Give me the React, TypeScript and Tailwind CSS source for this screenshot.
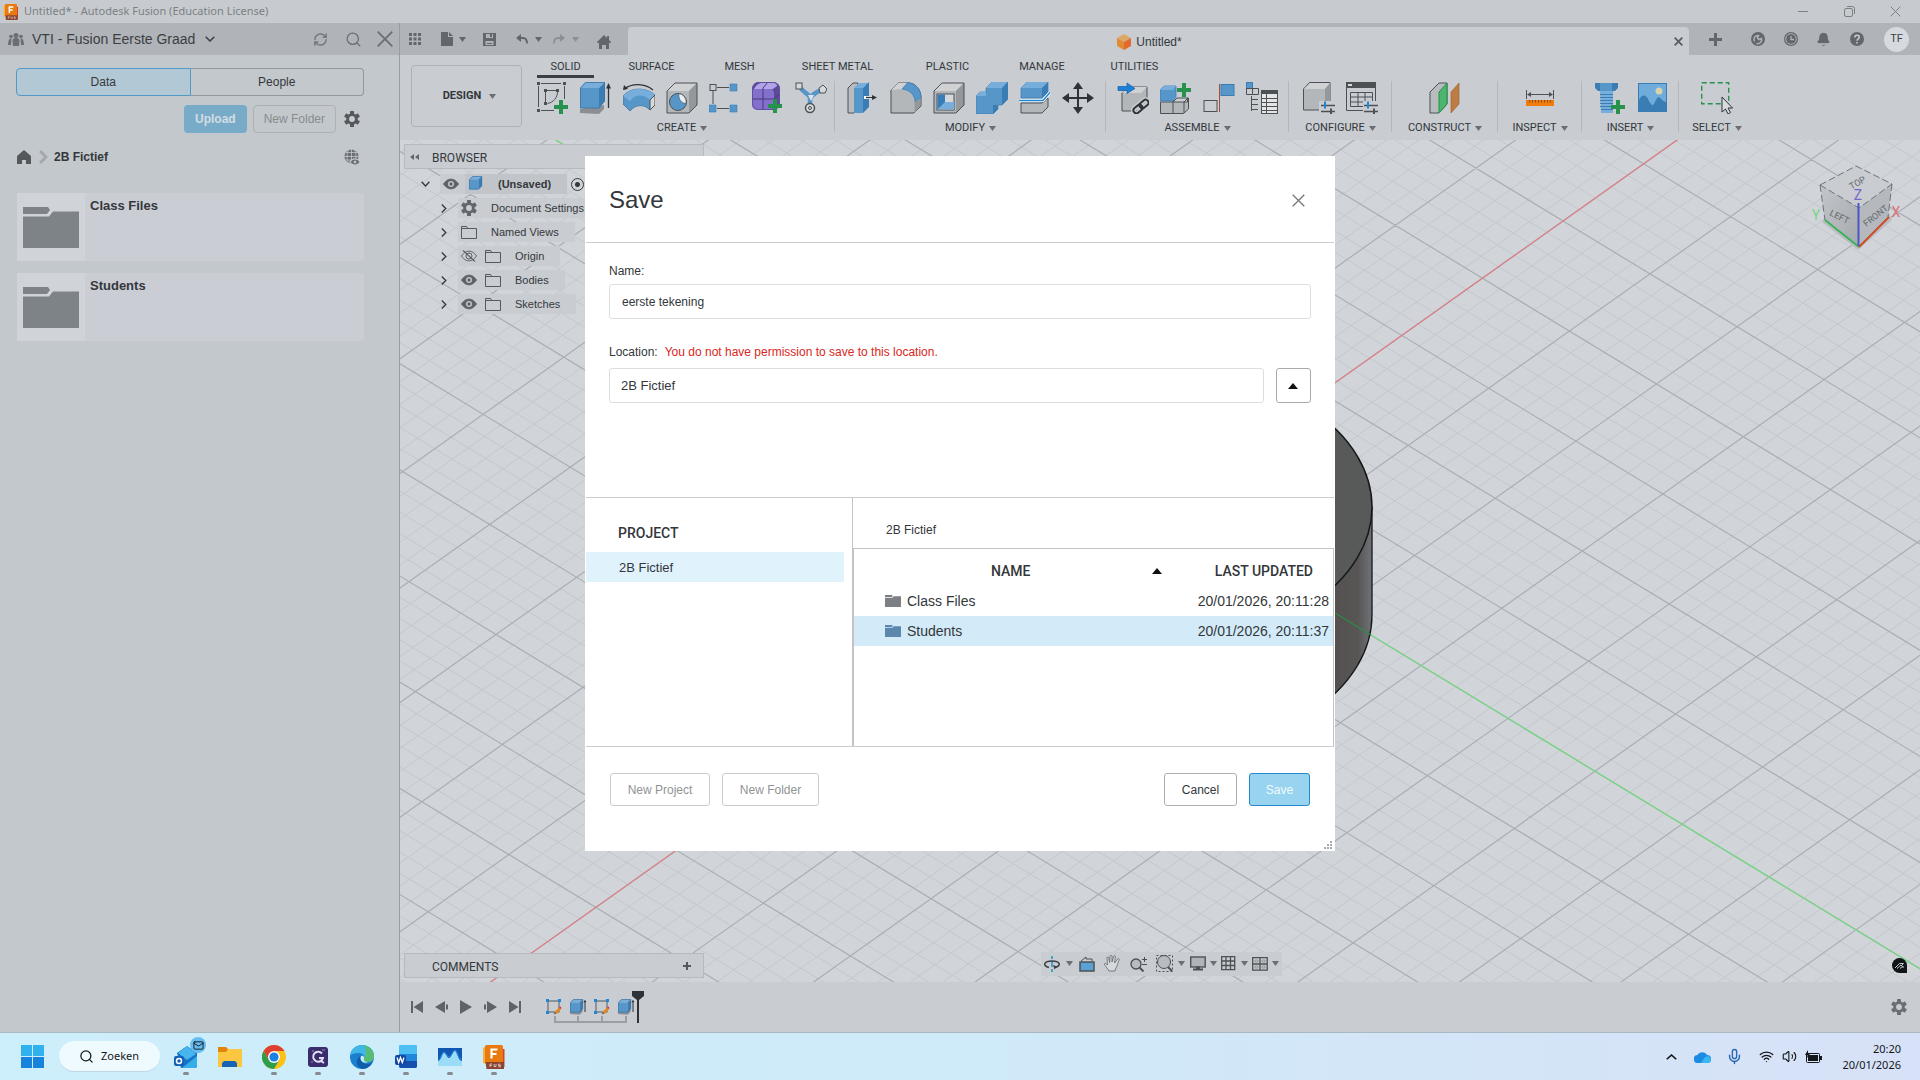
import React from "react";
import type { ReactNode } from "react";
import { Bell, Mail, Mic, RefreshCw, Search, Volume2, Wifi } from "lucide-react";

const BLUE = "#5796c9";
const BLUE_L = "#78aedb";
const BLUE_D = "#3a7db5";
const INK = "#4d5154";
const GREEN = "#27924b";

/* ---------- shared glyphs ---------- */

function Svg({ w = 32, h = 32, box, children }: { w?: number; h?: number; box?: string; children: ReactNode }) {
  return (
    <svg width={w} height={h} viewBox={box ?? `0 0 ${w} ${h}`} fill="none" aria-hidden="true" className="shrink-0">
      {children}
    </svg>
  );
}

function Caret({ className = "text-[#6b6f73]" }: { className?: string }) {
  return (
    <svg width="7" height="5" viewBox="0 0 7 5" aria-hidden="true" className={className}>
      <path d="M0 0h7L3.5 5z" fill="currentColor" />
    </svg>
  );
}

function Cross({ size, weight = 1.5 }: { size: number; weight?: number }) {
  return (
    <Svg w={size} h={size}>
      <path d={`M.7.700L${size - 0.7} ${size - 0.7}M${size - 0.7}.700L.7 ${size - 0.7}`} stroke="currentColor" strokeWidth={weight} />
    </Svg>
  );
}

function PlusSign({ size, weight }: { size: number; weight: number }) {
  return (
    <Svg w={size} h={size}>
      <path d={`M0 ${size / 2}h${size}M${size / 2} 0v${size}`} stroke="currentColor" strokeWidth={weight} />
    </Svg>
  );
}

function ChevDown({ w = 9, up = false }: { w?: number; up?: boolean }) {
  return (
    <svg width={w} height="6" viewBox="0 0 10 6" preserveAspectRatio="none" fill="none" aria-hidden="true" className="shrink-0">
      <path d={up ? "M.7 5.300L5 1l4.300 4.300" : "M.7.700L5 5 9.300.700"} stroke="currentColor" strokeWidth="1.500" />
    </svg>
  );
}

function ChevRight() {
  return (
    <Svg w={6} h={9}>
      <path d="M.8.500l4 4-4 4" stroke="currentColor" strokeWidth="1.300" />
    </Svg>
  );
}

function Gear({ size = 16, color = "#55595c" }: { size?: number; color?: string }) {
  return (
    <svg width={size} height={size} viewBox="0 0 16 16" aria-hidden="true" className="shrink-0">
      <g fill={color}>
        <rect x="6" y="0" width="4" height="16" rx="0.5" />
        <rect x="6" y="0" width="4" height="16" rx="0.5" transform="rotate(60 8 8)" />
        <rect x="6" y="0" width="4" height="16" rx="0.5" transform="rotate(120 8 8)" />
      </g>
      <circle cx="8" cy="8" r="4.3" fill="none" stroke={color} strokeWidth="3" />
      <circle cx="8" cy="8" r="2.9" fill="#c9ccd1" />
    </svg>
  );
}

function Eye({ off = false }: { off?: boolean }) {
  return (
    <svg width="16" height="12" viewBox="0 0 16 12" fill="none" aria-hidden="true" className="shrink-0">
      <path d="M.5 6C3 2.300 5.500 1.200 8 1.200S13 2.300 15.500 6C13 9.700 10.500 10.800 8 10.800S3 9.700.5 6z" fill={off ? "none" : "#5f6367"} stroke="#5f6367" />
      <circle cx="8" cy="6" r="3" fill={off ? "none" : "#c9ccd1"} stroke={off ? "#5f6367" : "none"} />
      {!off && <circle cx="8" cy="6" r="1.700" fill="#5f6367" />}
      {off && <path d="M2 .5l12 11" stroke="#5f6367" strokeWidth="1.200" />}
    </svg>
  );
}

function FolderLine() {
  return (
    <Svg w={16} h={14}>
      <path d="M.5 1.500h5l1.500 2h8.500v10H.5z" stroke="#55595c" />
      <path d="M1 3.500h6" stroke="#55595c" />
    </Svg>
  );
}

function FolderSolid({ w, h, color }: { w: number; h: number; color: string }) {
  return (
    <svg width={w} height={h} viewBox="0 0 56 41" preserveAspectRatio="none" aria-hidden="true" className="shrink-0">
      <path d="M0 0h25l2 3-3 4H0zM0 9.500h26l4-5h26V41H0z" fill={color} />
    </svg>
  );
}

function BlueCube({ arrow = false }: { arrow?: boolean }) {
  return (
    <Svg w={16} h={16}>
      {arrow && <path d="M0 12v3l9.500.7 3-2.700v-2z" fill="#8b8f94" />}
      <path d="M0 3.500L3.500 0H13L9.500 3.500z" fill={BLUE_L} />
      <path d="M0 3.500h9.500v10H0z" fill={BLUE} />
      <path d="M9.500 3.500L13 0v10l-3.500 3.500z" fill={BLUE_D} />
      <path d="M.4 3.700L3.700.4h9v9.400l-3.300 3.300h-9z" stroke="#3e76a8" strokeWidth=".7" />
      {arrow && <path d="M15 2v11M14 3.500l1-2 1 2" stroke="#2f3337" />}
    </Svg>
  );
}

function SketchMini() {
  return (
    <Svg w={16} h={16}>
      <rect x="2" y="2" width="11" height="11" stroke="#55595c" />
      <path d="M0 0h3v3H0zM12 0h3v3h-3zM0 12h3v3H0z" fill="#1d86d6" />
      <path d="M8 15l1-2.500 4-4 2 2-4 4z" fill="#e5861f" />
      <path d="M13 8.500l1.500-1 1 1.500-1 1z" fill="#d8352f" />
      <path d="M8 15.500l.8-2.500 1.600 1.600z" fill="#55595c" />
    </Svg>
  );
}

function FusionLogo({ size }: { size: number }) {
  return (
    <Svg w={size} h={size} box="0 0 24 24">
      <path d="M1 3l3-2v18l-3-1z" fill="#f6b03d" />
      <path d="M20 4h2.500v18H20z" fill="#d8402a" />
      <rect x="3" y="0" width="18" height="18" rx="1.500" fill="#e87a10" />
      <path d="M3.500 17H22v7H4.500z" fill="#8a4632" />
      <path d="M9.500 13.500v-9h6M9.500 9h5" stroke="#fff" strokeWidth="2.200" />
      <path d="M8 22v-3h2M8 20.500h1.700M12 19v2.500h2V19M18.500 19.200h-2v1.300h2v1.300h-2.200" stroke="#e8d8d0" strokeWidth=".8" />
    </Svg>
  );
}

/* ---------- ribbon icons ---------- */

const GreyBox = ({ front = "#b4b7ba" }: { front?: string }) => (
  <>
    <path d="M1 9l8-8h22v22l-8 8H1z" fill={front} />
    <path d="M1 9l8-8h22l-8 8z" fill="#cfd1d3" />
    <path d="M23 9l8-8v22l-8 8z" fill="#94989b" />
    <path d="M1 9l8-8h22v22l-8 8H1z" stroke={INK} />
  </>
);

const PlusMark = ({ x, y }: { x: number; y: number }) => (
  <path d={`M${x + 5} ${y}h4v5h5v4h-5v5h-4v-5h-5v-4h5z`} fill={GREEN} />
);

const icons: Record<string, ReactNode> = {
  sketch: (
    <Svg>
      <path d="M4 1.500h20M1.500 4v21M4 28.500h13M27.500 4v13M8.500 10v10M10 8.500h9M20.500 9.500c0 6-4 11-10 12" stroke={INK} />
      <path d="M0 0h3v3H0zM26 0h3v3h-3zM0 27h3v3H0zM7 7h3v3H7zM19 7h3v3h-3zM7 20h3v3H7z" fill={INK} />
      <PlusMark x={17} y={18} />
    </Svg>
  ),
  extrude: (
    <Svg>
      <path d="M0 27v4l19 1 5-5v-4z" fill="#8b8f94" />
      <path d="M0 6l5-6h20l-6 6z" fill={BLUE_L} />
      <path d="M0 6h19v20H0z" fill={BLUE} />
      <path d="M19 6l6-6v19l-6 7z" fill={BLUE_D} />
      <path d="M.5 6l5-5.500h19V19l-5.500 7H.5z" stroke="#3b719f" strokeWidth=".8" />
      <path d="M28.500 26V4" stroke="#2f3337" strokeWidth="1.300" />
      <path d="M26 6.500L28.500 1 31 6.500z" fill="#2f3337" />
    </Svg>
  ),
  revolve: (
    <Svg>
      <path d="M1 7C9 1 22 1 30 8" stroke="#2f3337" strokeWidth="1.300" />
      <path d="M0 8l1-5 4 4z" fill="#2f3337" />
      <path d="M0 14C8 5 23 5 32 13v10l-5 5c-6-6-14-6-20 1l-7-7z" fill={BLUE} stroke="#3b719f" strokeWidth=".8" />
      <path d="M0 14C8 5 23 5 32 13l-5 5C20 12 13 12 7 19z" fill={BLUE_L} />
      <path d="M27 18l5-5v10l-5 5z" fill="#d6d8da" stroke={INK} />
    </Svg>
  ),
  hole: (
    <Svg>
      <GreyBox />
      <circle cx="12" cy="20" r="8.500" fill={BLUE} stroke={INK} />
      <path d="M13 11.500a8.500 8.500 0 0 1 7 10c-4 0-8-4-7-10z" fill="#e9eef3" stroke={INK} strokeWidth=".6" />
    </Svg>
  ),
  pattern: (
    <Svg>
      <path d="M8 5.500h12M4 9v13M8 26.500h12" stroke={INK} />
      <rect x="1" y="2.500" width="6" height="6" stroke={INK} />
      <path d="M21 2h7v7h-7zM0 23h7v7H0zM21 23h7v7h-7z" fill={BLUE} stroke={BLUE_D} strokeWidth=".6" />
    </Svg>
  ),
  form: (
    <Svg>
      <rect x="0" y="0" width="28" height="28" rx="7" fill="#5c4a96" />
      <rect x="0" y="6" width="22" height="22" rx="5" fill="#8470cc" />
      <path d="M2 7c3-6 8-7 16-7 4 0 7 2 7 4l-4 3z" fill="#b3a4ea" />
      <path d="M0 17h22l6-5M11 6v22M11 6l5-6" stroke="#463a78" />
      <rect x=".5" y=".5" width="27" height="27" rx="6" stroke="#5e4fa0" />
      <PlusMark x={16} y={17} />
    </Svg>
  ),
  pipe: (
    <Svg>
      <path d="M5 5c3 6 9 6 10 11v10M27 8c-6 2-10 4-12 9" stroke={BLUE} strokeWidth="4.500" />
      <path d="M13 13h6l-3 6z" fill="#e0e4e8" />
      <rect x="1" y="1" width="6" height="6" fill="#d6d8da" stroke={INK} />
      <path d="M24 6l4-3 4 4-2 4h-5z" fill="#d6d8da" stroke={INK} />
      <circle cx="15" cy="26" r="4.500" fill="#d6d8da" stroke={INK} strokeWidth="1.500" />
      <circle cx="15" cy="26" r="1.500" stroke={INK} />
    </Svg>
  ),
  press: (
    <Svg>
      <path d="M1 6l5-5h5v25l-4 5H1z" fill="#b9bcbf" stroke={INK} />
      <path d="M7 6l5-5h10l-6 5z" fill={BLUE_L} />
      <path d="M7 6h9v25H7z" fill={BLUE} />
      <path d="M16 6l6-6v25l-6 6z" fill={BLUE_D} />
      <path d="M17 15.500h9" stroke="#fff" strokeWidth="3" />
      <path d="M19 15.500h7" stroke="#2f3337" strokeWidth="1.400" />
      <path d="M25 13l5 2.500-5 2.500z" fill="#2f3337" />
    </Svg>
  ),
  fillet: (
    <Svg>
      <path d="M1 8l7-7h10c8 0 13 7 13 15v8l-7 7H1z" fill="#b4b7ba" stroke={INK} />
      <path d="M1 8l7-7h9l-5 6z" fill="#cfd1d3" />
      <path d="M12 7l6-6.500c8 1 13 7 13 15L25 20c0-7-5-12-13-13z" fill={BLUE} stroke={BLUE_D} strokeWidth=".7" />
      <path d="M24.500 20.500l6-4.500v8l-6 7z" fill="#94989b" />
    </Svg>
  ),
  shell: (
    <Svg>
      <GreyBox />
      <rect x="4" y="12" width="17" height="16" fill="#d5d8db" stroke={INK} />
      <path d="M4.500 12.500H12v9l-7.500 6z" fill={BLUE_D} />
      <path d="M4.500 27.500L12 20h9v7.500z" fill={BLUE_L} />
    </Svg>
  ),
  combine: (
    <Svg>
      <path d="M0 14l4-4h6V6l6-6h16v17l-6 6h-4v4l-5 5H0z" fill={BLUE} stroke={BLUE_D} strokeWidth=".7" />
      <path d="M10 6l6-6h15l-5 6zM0 14l4-4h6v4z" fill={BLUE_L} />
      <path d="M26 6l6-6v17l-6 6zM17 23h5v4l-5 5z" fill={BLUE_D} />
    </Svg>
  ),
  split: (
    <Svg>
      <path d="M2 21h21l6-5v9l-6 6H2z" fill="#b4b7ba" stroke={INK} />
      <path d="M2 6l6-6h21v10l-6 6H2z" fill={BLUE} stroke={BLUE_D} strokeWidth=".7" />
      <path d="M2 6l6-6h21l-6 6z" fill={BLUE_L} />
      <path d="M23 6l6-6v10l-6 6z" fill={BLUE_D} />
      <path d="M0 18.500h24l7-8" stroke="#fff" strokeWidth="3" />
      <path d="M0 18.500h24l7-8" stroke="#1d86d6" strokeWidth="1.500" />
    </Svg>
  ),
  move: (
    <Svg>
      <path d="M16 4v24M4 16h24" stroke="#2f3337" strokeWidth="2" />
      <path d="M16 0l5 7H11zM16 32l5-7H11zM0 16l7-5v10zM32 16l-7-5v10z" fill="#2f3337" />
    </Svg>
  ),
  link: (
    <Svg>
      <path d="M5 11l6-6h19v18l-6 6H5z" fill="#b4b7ba" stroke={INK} />
      <path d="M5 11l6-6h19l-6 6z" fill="#cfd1d3" />
      <path d="M1 4.500h9V1l8 5.500-8 5V8.500H1z" fill="#1d7fd8" stroke="#155fa6" strokeWidth=".7" />
      <g stroke="#c9ccd1" strokeWidth="5">
        <rect x="16" y="24" width="10" height="6" rx="3" transform="rotate(-40 21 27)" />
        <rect x="22" y="19" width="10" height="6" rx="3" transform="rotate(-40 27 22)" />
      </g>
      <g stroke="#2f3337" strokeWidth="2">
        <rect x="16" y="24" width="10" height="6" rx="3" transform="rotate(-40 21 27)" />
        <rect x="22" y="19" width="10" height="6" rx="3" transform="rotate(-40 27 22)" />
      </g>
    </Svg>
  ),
  component: (
    <Svg>
      <path d="M.5 20h27V16h1v11l-5 4.500H.5z" fill="#b4b7ba" stroke={INK} />
      <path d="M13 31V18M13 20l4-4h11l-4 4v11" stroke={INK} />
      <path d="M0 8l4-4h12v11l-3 4H0z" fill={BLUE} stroke={BLUE_D} strokeWidth=".8" />
      <path d="M0 8l4-4h12l-3 4z" fill={BLUE_L} />
      <PlusMark x={17} y={1} />
    </Svg>
  ),
  joint: (
    <Svg>
      <rect x="1" y="18.500" width="13" height="11" stroke={INK} />
      <path d="M16.500 2v28" stroke="#a0522d" />
      <rect x="18" y="2.500" width="13" height="11" fill={BLUE} stroke={BLUE_D} />
    </Svg>
  ),
  bom: (
    <Svg>
      <rect x=".5" y=".5" width="6" height="6" fill={BLUE} stroke={BLUE_D} />
      <path d="M.5 6.500h6v6h-6zM6.500 6.500h6v6h-6z" stroke={INK} />
      <path d="M5.500 14v15M5.500 17.500H12M5.500 22.500H12M5.500 27.500H12" stroke={INK} />
      <rect x="15.500" y="8.500" width="16" height="23" fill="#e3e5e7" stroke={INK} />
      <path d="M15 8h17v4H15z" fill={INK} />
      <path d="M15 16.500h17M15 20.500h17M15 24.500h17M15 28.500h17M20.500 12v20" stroke={INK} />
    </Svg>
  ),
  configCube: (
    <Svg>
      <path d="M.5 7l6-6.500H27V22l-5 6H.5z" fill="#b4b7ba" stroke={INK} />
      <path d="M1 7l6-6h20l-5 6z" fill="#cfd1d3" />
      <path d="M22 7l5-6v21l-5 6z" fill="#94989b" />
      <path d="M16 19h16v13H16z" fill="#c9ccd1" />
      <path d="M18 23.500h14M18 29.500h14" stroke={INK} strokeWidth="1.500" />
      <path d="M22 19.500v7" stroke="#1d86d6" strokeWidth="2" />
      <path d="M28 26.500v5.500" stroke={INK} strokeWidth="2" />
    </Svg>
  ),
  configTable: (
    <Svg>
      <path d="M.5.500h29v28H.5z" stroke={INK} />
      <path d="M0 0h30v6H0z" fill={INK} />
      <path d="M2 2h4v2H2z" fill="#d6d8da" />
      <path d="M4.500 10.500h22v14h-22zM4.500 15h22M4.500 20h22M12 10v15M19 10v15" stroke={INK} />
      <path d="M17 19h15v13H17z" fill="#c9ccd1" />
      <path d="M18 23.500h14M18 29.500h14" stroke={INK} strokeWidth="1.500" />
      <path d="M22 19.500v7" stroke="#1d86d6" strokeWidth="2" />
      <path d="M28 26.500v5.500" stroke={INK} strokeWidth="2" />
    </Svg>
  ),
  plane: (
    <Svg>
      <path d="M1 10l9-9h8v21l-8 9H1z" fill="#b9bcbf" stroke={INK} />
      <path d="M10 10l8-9v21l-8 9z" fill="#4db56f" stroke={GREEN} />
      <path d="M22 10l8-9v21l-8 9z" fill="#bd7b45" stroke="#a3642f" strokeWidth=".7" />
    </Svg>
  ),
  measure: (
    <Svg>
      <path d="M2.500 8v9M29.500 8v9M4 12.500h24" stroke={INK} />
      <path d="M3 12.500l4-2.500v5zM29 12.500l-4-2.500v5z" fill={INK} />
      <path d="M2 18h28v6H2z" fill="#ef7c0c" />
      <path d="M5.500 18v2.500M8.500 18v2.500M11.500 18v2.500M14.500 18v2.500M17.500 18v2.500M20.500 18v2.500M23.500 18v2.500M26.500 18v2.500" stroke="#8a4a0a" />
    </Svg>
  ),
  bolt: (
    <Svg>
      <path d="M2 1h23v5l-3 3H5L2 6z" fill={BLUE_D} />
      <path d="M7 1h12v8H7z" fill={BLUE} />
      <path d="M7 9h13v22H8z" fill={BLUE_L} />
      <path d="M7 12.500h13M7 15.500h13M7 18.500h13M7 21.500h13M7 24.500h13M8 27.500h12" stroke={BLUE_D} />
      <PlusMark x={18} y={18} />
    </Svg>
  ),
  image: (
    <Svg>
      <rect x="2.500" y="1.500" width="28" height="28" fill="#6fabdb" stroke={BLUE_D} />
      <circle cx="23" cy="9" r="3.500" fill="#d9d3ac" />
      <path d="M3 18c3-6 7-6 10 1 2 4 4 6 6 1 2-5 4-6 6-3 2 2 4 3 5 3v9H3z" fill={BLUE_D} />
    </Svg>
  ),
  select: (
    <Svg>
      <rect x=".7" y=".7" width="27" height="21" stroke={GREEN} strokeWidth="1.400" strokeDasharray="5 3" />
      <path d="M21 15v15l3.500-3 2.500 5 2.500-1.500L27 26h4.500z" fill="#d9dcdf" stroke="#2f3337" />
    </Svg>
  ),
};

const groups: { label: string; width: string; items: [string, string][] }[] = [
  { label: "CREATE", width: "w-[306px]", items: [["sketch", "Create sketch"], ["extrude", "Extrude"], ["revolve", "Revolve"], ["hole", "Hole"], ["pattern", "Rectangular pattern"], ["form", "Create form"], ["pipe", "Automated modeling"]] },
  { label: "MODIFY", width: "w-[271px]", items: [["press", "Press pull"], ["fillet", "Fillet"], ["shell", "Shell"], ["combine", "Combine"], ["split", "Split body"], ["move", "Move"]] },
  { label: "ASSEMBLE", width: "w-[183px]", items: [["link", "Insert component"], ["component", "New component"], ["joint", "Joint"], ["bom", "Bill of materials"]] },
  { label: "CONFIGURE", width: "w-[103px]", items: [["configCube", "Configure"], ["configTable", "Configuration table"]] },
  { label: "CONSTRUCT", width: "w-[106px]", items: [["plane", "Offset plane"]] },
  { label: "INSPECT", width: "w-[84px]", items: [["measure", "Measure"]] },
  { label: "INSERT", width: "w-[97px]", items: [["bolt", "Insert fastener"], ["image", "Insert image"]] },
  { label: "SELECT", width: "w-[76px]", items: [["select", "Select"]] },
];

const ribbonTabs: [string, string][] = [
  ["SOLID", "w-[73px]"],
  ["SURFACE", "w-[99px]"],
  ["MESH", "w-[77px]"],
  ["SHEET METAL", "w-[119px]"],
  ["PLASTIC", "w-[101px]"],
  ["MANAGE", "w-[88px]"],
  ["UTILITIES", "w-[97px]"],
];

/* ---------- window chrome ---------- */

function TitleBar() {
  return (
    <header className="flex h-[23px] shrink-0 items-center bg-[#c7cbcf] pr-0.5 pl-[3px] text-[#7b8083]">
      <FusionLogo size={16} />
      <span className="ml-[5px] font-['Noto_Sans',sans-serif] text-[11px]">Untitled* - Autodesk Fusion (Education License)</span>
      <div className="ml-auto flex h-full">
        <button aria-label="Minimize" className="grid w-[46px] place-items-center"><span className="h-px w-2.5 bg-[#7b8083]" /></button>
        <button aria-label="Restore" className="grid w-[46px] place-items-center">
          <Svg w={11} h={11}>
            <rect x=".5" y="2.500" width="8" height="8" rx="1.500" stroke="currentColor" />
            <path d="M3 .5h5.500a2 2 0 0 1 2 2V8" stroke="currentColor" />
          </Svg>
        </button>
        <button aria-label="Close window" className="grid w-[46px] place-items-center"><Cross size={11} weight={1} /></button>
      </div>
    </header>
  );
}

function DataPanel() {
  return (
    <aside className="flex w-[400px] shrink-0 flex-col border-r border-[#999da1] bg-[#c3c8cc] font-['Liberation_Sans',sans-serif] text-[#34383c]">
      <div className="flex h-8 items-center bg-[#b0b3b8] pr-1.5 pl-2 text-[#6b6f73]">
        <Svg w={16} h={13}>
          <g fill="#6b6f73">
            <circle cx="8" cy="2.500" r="2.500" />
            <path d="M5 13l-.5-5C4.500 5.500 6 5 8 5s3.500.5 3.500 3L11 13z" />
            <circle cx="3" cy="3.500" r="1.800" />
            <path d="M0 12l.5-4c.3-2 1.500-2.500 3-2.500L3 12z" />
            <circle cx="13" cy="3.500" r="1.800" />
            <path d="M16 12l-.5-4c-.3-2-1.500-2.500-3-2.500l.5 6.500z" />
          </g>
        </Svg>
        <button className="ml-2 flex items-center gap-2.5 text-sm text-[#3c4044]">
          VTI - Fusion Eerste Graad
          <ChevDown w={10} />
        </button>
        <button aria-label="Refresh" className="ml-auto"><RefreshCw size={15} strokeWidth={2} /></button>
        <button aria-label="Search" className="ml-[17px]"><Search size={17} strokeWidth={1.8} /></button>
        <button aria-label="Close panel" className="ml-[15px]"><Cross size={16} weight={1.8} /></button>
      </div>

      <div className="pt-[13px] pr-[35px] pl-4">
        <div className="flex h-7 text-xs">
          <button className="flex-1 rounded-l-sm border border-[#5399c7] bg-[#b3c8d5]">Data</button>
          <button className="flex-1 rounded-r-sm border border-l-0 border-[#93979b]">People</button>
        </div>
        <div className="mt-[9px] flex h-7 items-center justify-end pr-1 text-xs">
          <button className="h-full rounded-sm bg-[#78abc7] px-[11px] font-bold text-[#d3dde4]">Upload</button>
          <button className="ml-1.5 h-full rounded-sm border border-[#adb1b5] px-2.5 text-[#878c8f]">New Folder</button>
          <button aria-label="Settings" className="ml-2"><Gear /></button>
        </div>
        <nav aria-label="Folder path" className="mt-3 flex h-6 items-center pr-1">
          <a href="#home" aria-label="Home" className="pl-px">
            <Svg w={14} h={14}>
              <path d="M0 6l7-6 7 6v8H9v-4H5v4H0z" fill="#55595c" />
            </Svg>
          </a>
          <span className="ml-2">
            <Svg w={9} h={14}>
              <path d="M1 1l6 6-6 6" stroke="#a5a9ad" strokeWidth="3" />
            </Svg>
          </span>
          <a href="#2b" className="ml-1.5 text-xs font-bold">2B Fictief</a>
          <button aria-label="Open on the web" className="ml-auto">
            <Svg w={16} h={16}>
              <circle cx="7.500" cy="7.500" r="7" fill="#6b6f73" />
              <path d="M0 7.500h15M1.500 3.500h12M1.500 11h12M7.500 0v15M4.500.5c-2 4-2 10 0 14M10.500.5c2 4 2 10 0 14" stroke="#c3c8cc" strokeWidth=".8" />
              <path d="M5 13c3-5 9-5 11.500 0-3 4-8 4-11.500 0z" fill="#c3c8cc" />
              <path d="M6.500 13c2-3.300 7-3.300 9 0-2 3.300-7 3.300-9 0z" fill="#6b6f73" />
              <circle cx="11" cy="13" r="1.300" fill="#c3c8cc" />
            </Svg>
          </button>
        </nav>
        <ul className="mt-6 space-y-3 pl-px">
          {["Class Files", "Students"].map((name) => (
            <li key={name} className="flex h-[68px] rounded-sm bg-[#cacdd3]">
              <div className="flex w-[68px] items-center justify-center bg-[#d0d4d9]">
                <FolderSolid w={56} h={41} color="#7e8387" />
              </div>
              <span className="pt-[3px] pl-[5px] text-[13px] font-bold">{name}</span>
            </li>
          ))}
        </ul>
      </div>
    </aside>
  );
}

function TabStrip() {
  const tool = "flex items-center";
  return (
    <div className="flex h-8 items-stretch bg-[#b0b3b8] pl-[9px] text-[#63676b]">
      <button aria-label="Data panel" className={tool}>
        <Svg w={12} h={12}>
          <path d="M0 0h3v3H0zM4.500 0h3v3h-3zM9 0h3v3H9zM0 4.500h3v3H0zM4.500 4.500h3v3h-3zM9 4.500h3v3H9zM0 9h3v3H0zM4.500 9h3v3h-3zM9 9h3v3H9z" fill="currentColor" />
        </Svg>
      </button>
      <button aria-label="File" className="ml-5 flex items-center gap-1.5">
        <Svg w={12} h={14}>
          <path d="M0 0h7v5h5v9H0z" fill="currentColor" />
          <path d="M8 0l4 4H8z" fill="currentColor" />
        </Svg>
        <Caret className="text-[#63676b]" />
      </button>
      <button aria-label="Save file" className="ml-[17px] flex items-center">
        <Svg w={13} h={13}>
          <path d="M0 0h13v13H0z" fill="currentColor" />
          <path d="M3 1h7v4H3zM2.500 8h8v4h-8z" fill="#b0b3b8" />
          <path d="M7 1h2v3H7zM4 10h5v1H4z" fill="currentColor" />
        </Svg>
      </button>
      <button aria-label="Undo" className="ml-5 flex items-center gap-[7px]">
        <Svg w={12} h={10}>
          <path d="M3 4h4c3 0 4 2 4 5.500" stroke="currentColor" strokeWidth="1.800" />
          <path d="M0 4l5-4v8z" fill="currentColor" />
        </Svg>
        <Caret className="text-[#63676b]" />
      </button>
      <button aria-label="Redo" className="ml-[11px] flex items-center gap-[7px] text-[#8c9094]">
        <Svg w={12} h={10}>
          <path d="M9 4H5C2 4 1 6 1 9.500" stroke="currentColor" strokeWidth="1.800" />
          <path d="M12 4L7 0v8z" fill="currentColor" />
        </Svg>
        <Caret className="text-[#8c9094]" />
      </button>
      <button aria-label="Home tab" className="ml-[18px] flex items-center pt-1.5">
        <Svg w={14} h={14}>
          <path d="M0 7l7-7 3 3V1h2v4l2 2-.5 1H12v6H9v-4H5v4H2V8H.5z" fill="currentColor" />
        </Svg>
      </button>
      <div className="relative mt-1 ml-[17px] flex flex-1 items-center justify-center rounded-t bg-[#c9ccd1] pt-px pr-[18px] text-[#34383c]">
        <Svg w={14} h={16}>
          <path d="M0 4l7-4 7 4-7 4z" fill="#dda869" />
          <path d="M0 4l7 4v8l-7-4z" fill="#e08c35" />
          <path d="M14 4L7 8v8l7-4z" fill="#e4692a" />
        </Svg>
        <span className="ml-[5px] font-['Liberation_Sans',sans-serif] text-xs">Untitled*</span>
        <button aria-label="Close document" className="absolute inset-y-0 right-1.5 flex items-center text-[#5a5e62]"><Cross size={9} weight={1.8} /></button>
      </div>
      <button aria-label="New tab" className="flex w-[53px] items-center justify-center"><PlusSign size={13} weight={3} /></button>
      <div className="mr-[11px] flex items-center">
        <button aria-label="Extensions" className="ml-[9px]">
          <Svg w={14} h={14}>
            <circle cx="7" cy="7" r="7" fill="currentColor" />
            <path d="M3.500 9.500a4 4 0 0 1 4-6L6.500 6l1.500 1.500 2.500-1a4 4 0 0 1-5 5" stroke="#b0b3b8" strokeWidth="1.500" />
          </Svg>
        </button>
        <button aria-label="Job status" className="ml-[19px]">
          <Svg w={14} h={14}>
            <circle cx="7" cy="7" r="7" fill="currentColor" />
            <circle cx="7" cy="7" r="5.300" stroke="#b0b3b8" />
            <path d="M7 4v3.500h3" stroke="#b0b3b8" strokeWidth="1.300" />
          </Svg>
        </button>
        <button aria-label="Notifications" className="ml-[18px]"><Bell size={15} strokeWidth={1.5} fill="currentColor" /></button>
        <button aria-label="Help" className="ml-[19px]">
          <Svg w={14} h={14}>
            <circle cx="7" cy="7" r="7" fill="currentColor" />
            <path d="M4.800 5.500c0-3 4.500-3 4.500-.3C9.300 7 7 6.800 7 8.800M7 10v1.500" stroke="#c9ccd1" strokeWidth="1.500" />
          </Svg>
        </button>
        <button aria-label="Account" className="ml-5 grid size-[25px] place-items-center rounded-full bg-[#d6dadf] font-['Roboto',sans-serif] text-[11px] text-[#3c4347]">TF</button>
      </div>
    </div>
  );
}

function Ribbon() {
  return (
    <div className="flex h-[85px] bg-[#c9ccd1] font-['Roboto',sans-serif] text-[11px] text-[#33373b]">
      <button className="mt-2.5 ml-[11px] flex h-[62px] w-[111px] shrink-0 items-center justify-center gap-2 rounded border border-[#adb1b6] pl-1.5 font-bold">
        DESIGN <Caret />
      </button>
      <div className="ml-[7px] flex flex-col">
        <div className="flex h-6">
          {ribbonTabs.map(([t, w], i) => (
            <button key={t} className={`${w} relative flex justify-center pt-1 leading-4 whitespace-nowrap`}>
              {t}
              {i === 0 && <span className="absolute inset-x-2 bottom-px h-[3px] bg-[#3c4044]" />}
            </button>
          ))}
        </div>
        <div className="flex">
          {groups.map((g, gi) => (
            <div key={g.label} className={`${g.width} flex flex-col items-center pt-[3px] ${gi < groups.length - 1 ? "bg-[linear-gradient(#b4b7bc,#b4b7bc)] bg-[length:1px_51px] bg-[position:right_2px] bg-no-repeat" : ""}`}>
              <div className="flex gap-[11px]">
                {g.items.map(([id, label]) => (
                  <button key={id} aria-label={label}>{icons[id]}</button>
                ))}
              </div>
              <button className="mt-[5px] flex items-center gap-1 leading-[18px]">
                {g.label} <Caret />
              </button>
            </div>
          ))}
        </div>
      </div>
    </div>
  );
}

/* ---------- viewport ---------- */

const ORIGIN = { x: 1160, y: 507 };
const U = { x: 17.4, y: 10.57 };
const V = { x: 16.12, y: -11.44 };
const SPAN = 130;

function gridLine(k: number, along: typeof U, across: typeof U) {
  const cx = ORIGIN.x + across.x * k;
  const cy = ORIGIN.y + across.y * k;
  return `M${(cx - along.x * SPAN).toFixed(1)} ${(cy - along.y * SPAN).toFixed(1)}L${(cx + along.x * SPAN).toFixed(1)} ${(cy + along.y * SPAN).toFixed(1)}`;
}

const steps = Array.from({ length: 141 }, (_, i) => i - 70);
const pathFor = (major: boolean) =>
  steps
    .filter((k) => (k % 5 === 0) === major)
    .map((k) => gridLine(k, U, V) + gridLine(k, V, U))
    .join("");
const minorPath = pathFor(false);
const majorPath = pathFor(true);

function Scene() {
  return (
    <svg className="absolute inset-0 size-full" viewBox="400 140 1520 842" preserveAspectRatio="xMinYMin slice" fill="none" aria-label="Model view">
      <defs>
        <linearGradient id="side" x1="1160" x2="1373" y1="0" y2="0" gradientUnits="userSpaceOnUse">
          <stop offset="0.800" stopColor="#554f50" />
          <stop offset="0.930" stopColor="#585655" />
          <stop offset="1" stopColor="#70767a" />
        </linearGradient>
        <linearGradient id="cubeL" x1="0" y1="0" x2="1" y2="1">
          <stop offset="0" stopColor="#c3c6ca" />
          <stop offset="1" stopColor="#a5a9ad" />
        </linearGradient>
      </defs>
      <path d={minorPath} stroke="#c4c8cc" strokeWidth="1" />
      <path d={majorPath} stroke="#aaaeb3" strokeWidth="1.200" />
      <path d={gridLine(0, V, U)} stroke="#dc8087" strokeWidth="1.300" />
      <path d={gridLine(0, U, V)} stroke="#78d684" strokeWidth="1.300" />
      <path d="M948 507v108a212 139 0 0 0 424 0V507z" fill="url(#side)" stroke="#15181a" strokeWidth="1.300" />
      <ellipse cx="1160" cy="507" rx="212" ry="139" fill="#575a59" stroke="#15181a" strokeWidth="1.500" />
      <path d="M1335 613l36 22" stroke="#2a8c43" strokeWidth="1.300" />

      <g>
        <path d="M1822 222l36 28 34-30-4-8h-60z" fill="#b9bdc2" />
        <path d="M1820 185l36-19 36 18-33 24z" fill="#c9ccd0" />
        <path d="M1820 185l39 23v39l-34-27z" fill="url(#cubeL)" />
        <path d="M1892 184l-33 24v39l29-30z" fill="#b5b9bd" />
        <path d="M1820 185l36-19 36 18-33 24zM1820 185l5 35M1892 184l-4 33" stroke="#6f7377" strokeDasharray="7 3" />
        <path d="M1825 220l34 27" stroke="#39b35a" strokeWidth="2" />
        <path d="M1859 247l30-30" stroke="#cf4a26" strokeWidth="2" />
        <path d="M1858.500 203v43" stroke="#4a55c4" strokeWidth="2" />
        <g fill="#66696d" fontFamily="Roboto, sans-serif" fontSize="9" textAnchor="middle">
          <text x="1857" y="186" transform="rotate(-30 1857 182)">TOP</text>
          <text x="1840" y="220" transform="rotate(26 1840 216)">LEFT</text>
          <text x="1875" y="219" transform="rotate(-38 1875 215)">FRONT</text>
        </g>
        <g fontFamily="Roboto, sans-serif" fontSize="14" textAnchor="middle">
          <text x="1858" y="200" fill="#7668c8">Z</text>
          <text x="1816" y="220" fill="#78d684">Y</text>
          <text x="1896" y="217" fill="#dc7078">X</text>
        </g>
      </g>
    </svg>
  );
}

const tree: { name: string; eye?: "on" | "off"; icon: "gear" | "folder" }[] = [
  { name: "Document Settings", icon: "gear" },
  { name: "Named Views", icon: "folder" },
  { name: "Origin", icon: "folder", eye: "off" },
  { name: "Bodies", icon: "folder", eye: "on" },
  { name: "Sketches", icon: "folder", eye: "on" },
];

function Browser() {
  return (
    <section className="absolute top-1 left-1 w-[300px] text-[#34383c]">
      <div className="flex h-[25px] items-center border border-[#b6babf] bg-[#c9ccd1] px-[5px]">
        <Svg w={9} h={6}>
          <path d="M4 0v6L0 3zM9 0v6L5 3z" fill="#63676b" />
        </Svg>
        <h2 className="ml-[13px] pt-0.5 font-['Roboto',sans-serif] text-xs">BROWSER</h2>
        <span className="mr-1.5 ml-auto h-0.5 w-2 bg-[#63676b]" />
      </div>
      <ul className="mt-[5px] space-y-1 font-['Liberation_Sans',sans-serif] text-[11px]">
        <li className="flex h-5 items-center pl-[17px]">
          <ChevDown />
          <button aria-label="Hide" className="ml-2.5 flex h-5 w-[25px] items-center bg-[#c9ccd1] pl-[3px]"><Eye /></button>
          <span className="flex h-5 w-[102px] items-center bg-[#c1c5c9] pl-1 font-bold"><BlueCube /><span className="ml-[13px]">(Unsaved)</span></span>
          <input type="radio" defaultChecked aria-label="Activate (Unsaved)" className="ml-1 size-[13px] appearance-none rounded-full border border-[#34383c] bg-[radial-gradient(circle,#34383c_0_2px,transparent_3px)]" />
        </li>
        {tree.map((t) => (
          <li key={t.name} className="flex h-5 items-center pl-[37px]">
            <ChevRight />
            <span className="ml-[11px] flex h-5 items-center bg-[#c9ccd1] pr-4 pl-[3px] whitespace-nowrap">
              {t.eye && <span className="mr-2"><Eye off={t.eye === "off"} /></span>}
              {t.icon === "gear" ? <Gear color="#63676b" /> : <FolderLine />}
              <span className="ml-3.5">{t.name}</span>
            </span>
          </li>
        ))}
      </ul>
    </section>
  );
}

function NavBar() {
  return (
    <div className="absolute bottom-1.5 left-[641px] flex h-6 items-center bg-[#c9ccd1] px-[3px] pb-px">
      <button aria-label="Orbit" className="flex w-[35px] items-center gap-[6px]">
        <Svg w={16} h={16}>
          <path d="M8 0v3M8 5v6M8 13v3" stroke="#4a9fd0" strokeWidth="2" />
          <path d="M5 11.500C-2 9.500 0 5 8 5s10 4.500 3 6.500" stroke="#3c4044" strokeWidth="1.500" />
          <path d="M9 9l4 1.500-2.500 3z" fill="#3c4044" />
        </Svg>
        <Caret />
      </button>
      <button aria-label="Look at" className="w-[25px]">
        <Svg w={16} h={16}>
          <rect x="1" y="6" width="14" height="9" fill="#5aa0d2" stroke={INK} strokeWidth="1.500" />
          <path d="M2 5l5-4v2h6v2" stroke={INK} />
        </Svg>
      </button>
      <button aria-label="Pan" className="w-[26px]">
        <Svg w={17} h={17}>
          <path d="M5 16c-1-2-4-5-4.500-6.500C0 8 2 8 3.500 10L3 3c0-1.500 1.500-1.500 1.800 0l.8 4.500L6 1.500c.2-1.500 2-1.500 2 0V7l1.500-5.500c.5-1.300 2-1 1.800.5L10.500 8l3-4c1-1 2.200 0 1.500 1.300C13.500 8 13.500 11 12 13l-1 3z" fill="#d6d9dc" stroke="#63676b" strokeWidth=".8" />
        </Svg>
      </button>
      <button aria-label="Zoom" className="w-[26px]">
        <Svg w={18} h={16}>
          <circle cx="6" cy="8" r="5" fill="#b8bbbf" stroke={INK} strokeWidth="1.300" />
          <path d="M9.500 11.500l4 4" stroke={INK} strokeWidth="2" />
          <path d="M12 3.500h5M14.500 1v5M12 8.500h5" stroke={INK} />
        </Svg>
      </button>
      <button aria-label="Fit" className="flex w-[34px] items-center gap-1">
        <Svg w={18} h={17}>
          <rect x=".5" y=".5" width="16" height="16" stroke={INK} strokeDasharray="2 2" />
          <circle cx="8" cy="7" r="6.500" fill="#b8bbbf" stroke={INK} />
          <path d="M12 12l4 4" stroke={INK} strokeWidth="2" />
        </Svg>
        <Caret />
      </button>
      <button aria-label="Display settings" className="flex w-[31px] items-center gap-1">
        <Svg w={16} h={15}>
          <rect x=".7" y="1" width="14.500" height="10" fill="#b0b3b7" stroke={INK} strokeWidth="1.400" />
          <path d="M3 13.500h10M6 11.500h4" stroke={INK} strokeWidth="2" />
        </Svg>
        <Caret />
      </button>
      <button aria-label="Grid and snaps" className="flex w-[31px] items-center gap-[5px]">
        <Svg w={15} h={15}>
          <path d="M.7.700h13v13H.7zM5 1v13M9.500 1v13M1 5h13M1 9.500h13" stroke={INK} strokeWidth="1.300" />
        </Svg>
        <Caret />
      </button>
      <button aria-label="Viewports" className="flex items-center gap-1">
        <Svg w={16} h={14}>
          <path d="M.7.700h14.500v12.500H.7zM8 1v12M1 7h14" stroke={INK} strokeWidth="1.300" />
          <path d="M3 3h3v2H3zM10 3h3v2h-3zM3 9h3v2H3zM10 9h3v2h-3z" stroke="#8a8e92" strokeWidth=".8" />
        </Svg>
        <Caret />
      </button>
    </div>
  );
}

function Viewport() {
  return (
    <main className="relative min-h-0 flex-1 overflow-hidden bg-[#d1d5da]">
      <Scene />
      <Browser />
      <div className="absolute bottom-1 left-1 flex h-[25px] w-[300px] items-center justify-between border border-[#b6babf] bg-[#c9ccd1] pr-3 pl-[27px] font-['Roboto',sans-serif] text-xs text-[#34383c]">
        <span className="pt-0.5">COMMENTS</span>
        <button aria-label="Add comment" className="text-[#55595c]"><PlusSign size={8} weight={2} /></button>
      </div>
      <NavBar />
      <button aria-label="Assistant" className="absolute right-[13px] bottom-[9px]">
        <Svg w={15} h={15}>
          <path d="M7.500 0A7.500 7.500 0 0 1 15 7.500V15H7.500a7.500 7.500 0 0 1 0-15z" fill="#111518" />
          <path d="M3 10l4.500-4.500h4L9 8M5 10.500L9 7M8 10.500l3-2.500v2" stroke="#c9cdd2" strokeWidth="1" />
        </Svg>
      </button>
    </main>
  );
}

function Timeline() {
  return (
    <div className="relative flex h-[50px] shrink-0 items-center bg-[#c9ccd1] pr-[13px] pl-[11px] text-[#5f6367]">
      <div className="flex gap-3">
        <button aria-label="Go to start"><Svg w={12} h={14}><path d="M0 1h2v12H0zM12 1v12L2.500 7z" fill="currentColor" /></Svg></button>
        <button aria-label="Step back"><Svg w={13} h={14}><path d="M10 1v12L0 7zM11 4.500h2v5h-2z" fill="currentColor" /></Svg></button>
        <button aria-label="Play"><Svg w={12} h={14}><path d="M0 0l12 7-12 7z" fill="currentColor" /></Svg></button>
        <button aria-label="Step forward"><Svg w={13} h={14}><path d="M3 1l10 6-10 6zM0 4.500h2v5H0z" fill="currentColor" /></Svg></button>
        <button aria-label="Go to end"><Svg w={12} h={14}><path d="M0 1l9.500 6L0 13zM10 1h2v12h-2z" fill="currentColor" /></Svg></button>
      </div>
      <div className="ml-[25px] flex flex-col">
        <div className="mt-2 flex gap-2">
          <button aria-label="Sketch 1"><SketchMini /></button>
          <button aria-label="Extrude 1"><BlueCube arrow /></button>
          <button aria-label="Sketch 2"><SketchMini /></button>
          <button aria-label="Extrude 2"><BlueCube arrow /></button>
        </div>
        <Svg w={88} h={8}>
          <path d="M9 1v6h71V1M32 1v6M56 1v6" stroke="#9b9fa3" strokeWidth="2" />
        </Svg>
      </div>
      <div className="-ml-0.5">
        <Svg w={12} h={32}>
          <path d="M0 0h12v5L7 9v23H5V9L0 5z" fill="#2f3337" />
        </Svg>
      </div>
      <button aria-label="Timeline settings" className="ml-auto"><Gear color="#6b6f73" /></button>
    </div>
  );
}

/* ---------- save dialog ---------- */

function SaveDialog() {
  const field = "h-[35px] rounded-[3px] border border-[#dcdedf] bg-white px-[11px] outline-none";
  return (
    <div className="absolute inset-0 flex items-start justify-center pt-[156px]">
      <div role="dialog" aria-labelledby="save-title" className="relative flex w-[750px] flex-col bg-white px-px pb-[45px] font-['Liberation_Sans',sans-serif] text-xs text-[#33373b]">
        <div className="flex h-[87px] items-center justify-between border-b border-[#cccccc] pt-0.5 pr-[29px] pl-[23px]">
          <h1 id="save-title" className="text-2xl">Save</h1>
          <button aria-label="Close dialog" className="text-[#70787d]"><Cross size={13} weight={1.3} /></button>
        </div>

        <div className="flex h-[254px] flex-col px-[23px] pt-5">
          <label htmlFor="doc-name" className="leading-[17px]">Name:</label>
          <input id="doc-name" defaultValue="eerste tekening" className={`${field} mt-1 pl-3 text-xs`} />
          <div className="mt-6 flex gap-[7px] leading-[18px]">
            <label htmlFor="doc-location">Location:</label>
            <span className="text-[#d8261c]">You do not have permission to save to this location.</span>
          </div>
          <div className="mt-[7px] flex gap-3">
            <input id="doc-location" defaultValue="2B Fictief" className={`${field} min-w-0 flex-1 text-[13px]`} />
            <button aria-label="Collapse location" className="grid size-[35px] place-items-center rounded-[3px] border border-[#a8abad] pr-0.5">
              <svg width="10" height="6" viewBox="0 0 10 6" aria-hidden="true"><path d="M5 0l5 6H0z" fill="#111" /></svg>
            </button>
          </div>
        </div>

        <div className="flex h-[250px] border-y border-[#cccccc]">
          <div className="w-[267px] border-r border-[#c4c4c4] pt-[25px]">
            <h2 className="pl-8 font-['Roboto',sans-serif] text-sm leading-5 font-medium">PROJECT</h2>
            <button className="mt-[9px] flex h-[30px] w-[258px] items-center bg-[#e0f2fb] pt-0.5 pl-[33px] text-[13px]">2B Fictief</button>
          </div>
          <div className="flex min-w-0 flex-1 flex-col">
            <div className="h-[50px] pt-[22px] pl-[33px] leading-5">2B Fictief</div>
            <div className="flex-1 border-t border-r border-l border-[#c4c4c4]">
              <table className="w-full border-collapse text-sm">
                <thead>
                  <tr className="h-[37px] font-['Roboto',sans-serif] leading-4">
                    <th scope="col" className="w-[330px] pt-1.5 pb-0 pl-[137px] align-middle font-medium">
                      <span className="flex items-center justify-between pr-[22px]">
                        NAME
                        <svg width="10" height="6" viewBox="0 0 10 6" aria-hidden="true"><path d="M5 0l5 6H0z" fill="#111" /></svg>
                      </span>
                    </th>
                    <th scope="col" className="pt-1.5 pr-5 pb-0 text-right align-middle font-medium whitespace-nowrap">LAST UPDATED</th>
                  </tr>
                </thead>
                <tbody>
                  {[
                    ["Class Files", "20/01/2026, 20:11:28", false],
                    ["Students", "20/01/2026, 20:11:37", true],
                  ].map(([name, date, on]) => (
                    <tr key={String(name)} className={on ? "h-[30px] bg-[#d3ebf8]" : "h-[30px]"}>
                      <td className="pl-[31px]">
                        <span className="flex items-center gap-1.5">
                          <FolderSolid w={16} h={12} color={on ? "#5b87ad" : "#7c8084"} />
                          {name}
                        </span>
                      </td>
                      <td className="pr-1 text-right whitespace-nowrap">{date}</td>
                    </tr>
                  ))}
                </tbody>
              </table>
            </div>
          </div>
        </div>

        <div className="mt-[26px] flex h-[33px] px-6">
          <button className="w-[100px] rounded-[3px] border border-[#cbcdce] text-[#8f9494]">New Project</button>
          <button className="ml-3 w-[97px] rounded-[3px] border border-[#cbcdce] text-[#8f9494]">New Folder</button>
          <button className="ml-auto w-[73px] rounded-[3px] border border-[#adb0b2]">Cancel</button>
          <button className="ml-3 w-[61px] rounded-[3px] border border-[#2489cf] bg-[#98d4f0] text-[#f2fafe]">Save</button>
        </div>

        <span className="absolute right-[3px] bottom-[2px]">
          <Svg w={8} h={8}>
            <path d="M6 0h2v2H6zM6 3h2v2H6zM6 6h2v2H6zM3 3h2v2H3zM3 6h2v2H3zM0 6h2v2H0z" fill="#a8acb0" />
          </Svg>
        </span>
      </div>
    </div>
  );
}

/* ---------- Windows taskbar ---------- */

const apps: [string, boolean, ReactNode][] = [
  ["Outlook", true, (
    <Svg w={24} h={24}>
      <path d="M3 8L13 1l10 7v13c0 1-1 2-2 2H7z" fill="#1672c9" />
      <path d="M4 8l9-7 9 8-9 6z" fill="#46b5ee" />
      <path d="M8 23l15-12v10l-2 2z" fill="#37aeea" />
      <rect x="0" y="11" width="10" height="10" rx="2" fill="#1261b8" />
      <circle cx="5" cy="16" r="2.500" stroke="#fff" strokeWidth="1.500" />
    </Svg>
  )],
  ["Verkenner", false, (
    <Svg w={24} h={22}>
      <path d="M0 1h8l3 3h12v8H0z" fill="#e3830d" />
      <path d="M0 6h8l2-3h14v18H0z" fill="#fbc640" />
      <path d="M4 21v-4l2-2h11l2 2v4z" fill="#1864b4" />
    </Svg>
  )],
  ["Chrome", true, (
    <Svg w={24} h={24}>
      <circle cx="12" cy="12" r="12" fill="#fbc116" />
      <path d="M1.600 6A12 12 0 0 1 22.400 6H12L6.800 15z" fill="#df3f30" />
      <path d="M1.600 6A12 12 0 0 0 12 24l5.200-9H6.800z" fill="#2b9d4b" />
      <circle cx="12" cy="12" r="6" fill="#fff" />
      <circle cx="12" cy="12" r="4.600" fill="#1c81e4" />
    </Svg>
  )],
  ["G app", true, (
    <Svg w={20} h={20}>
      <rect width="20" height="20" rx="3" fill="#3a2d6b" />
      <path d="M14 6.500A5 5 0 1 0 15 11h-4M13 14l3 2" stroke="#e4dcf5" strokeWidth="2" />
      <path d="M4 4h2M14 3h3M3 15h2" stroke="#9a86d8" />
    </Svg>
  )],
  ["Edge", true, (
    <Svg w={24} h={24}>
      <circle cx="12" cy="12" r="12" fill="#1b7fd0" />
      <path d="M0 11C1 4 6 0 12 0c7 0 12 5 12 11 0 4-3 6-6 6s-5-1-4-3c1-3-1-6-5-6-4 0-8 1-9 3z" fill="#3fb8e8" />
      <path d="M14 .3C20 1 24 6 24 11c0 4-3 6-6 6s-5-1-4-3c2-4 3-9 0-13.700z" fill="#58bd74" />
      <path d="M22 18c-4 7-13 8-15 1-1-4 1-7 4-8-2 6 4 10 11 7z" fill="#0f5cab" />
      <path d="M11 11c2-1 3.500 1 3 3-1 2 1 3 4 3-4 2-9-1-7-6z" fill="#cdeefb" />
    </Svg>
  )],
  ["Word", true, (
    <Svg w={22} h={23}>
      <rect x="4" y="0" width="18" height="23" rx="2" fill="#1f86dc" />
      <path d="M6 0h14c1 0 2 1 2 2v7H4V2c0-1 1-2 2-2z" fill="#4cc0f2" />
      <path d="M4 16h18v5c0 1-1 2-2 2H6c-1 0-2-1-2-2z" fill="#144fae" />
      <rect x="0" y="10" width="11" height="10" rx="2" fill="#1247a0" />
      <path d="M2 12.500l1.700 5 1.800-5 1.800 5L9 12.500" stroke="#fff" strokeWidth="1.300" />
    </Svg>
  )],
  ["Taakbeheer", true, (
    <Svg w={24} h={18}>
      <path d="M0 0h24v18H0z" fill="#1256b3" />
      <path d="M0 13c3 0 4-8 6-8s3 5 5 5 4-7 6-7 3 10 7 10v5H0z" fill="#9bdcf9" />
      <path d="M0 12c3 0 4-8 6-8s3 5 5 5 4-7 6-7 3 9 7 9" stroke="#2b8fe0" />
    </Svg>
  )],
  ["Fusion", true, <FusionLogo key="f" size={24} />],
];

function Taskbar() {
  return (
    <footer className="flex h-12 shrink-0 items-center border-t border-[#a9b8c3] bg-linear-to-r from-[#cdeefb] via-[#cfeaf9] to-[#d7e1f7] pr-[19px] pl-[21px] font-['Noto_Sans',sans-serif] text-[#14181b]">
      <button aria-label="Start">
        <Svg w={23} h={23}>
          <path d="M0 0h11v11H0zM12 0h11v11H12z" fill="#31b2ee" />
          <path d="M0 12h11v11H0zM12 12h11v11H12z" fill="#1684dc" />
        </Svg>
      </button>
      <button className="ml-[15px] flex h-[31px] w-[101px] items-center gap-[7px] rounded-full border-b border-[#bcd8e6] bg-[#effaff] pl-5 text-[11px]">
        <Search size={15} strokeWidth={2} /> Zoeken
      </button>
      <div className="ml-1 flex h-full">
        {apps.map(([name, running, icon], i) => (
          <button key={name} aria-label={name} className="relative grid w-11 place-items-center">
            {icon}
            {i === 0 && (
              <span className="absolute top-1 right-0.5 grid size-4 place-items-center rounded-full bg-[#67bdf0]"><Mail size={11} strokeWidth={2} /></span>
            )}
            {running && <span className="absolute bottom-[5px] h-[3px] w-1.5 rounded-full bg-[#858b8f]" />}
          </button>
        ))}
      </div>
      <div className="ml-auto flex items-center">
        <button aria-label="Hidden icons"><ChevDown w={11} up /></button>
        <button aria-label="OneDrive" className="ml-[17px]">
          <Svg w={17} h={12}>
            <path d="M4 12a4 4 0 0 1-.5-8A5.500 5.500 0 0 1 13 4a4 4 0 0 1 0 8z" fill="#1c8be4" />
            <path d="M7 12l4-6c4-2 6 1 6 3s-2 3-3 3z" fill="#39b5f0" />
          </Svg>
        </button>
        <button aria-label="Microphone" className="ml-[15px] text-[#2a66b2]"><Mic size={17} strokeWidth={2} /></button>
        <div className="ml-4 flex items-center gap-2">
          <Wifi size={15} strokeWidth={2} />
          <Volume2 size={15} strokeWidth={1.8} />
          <Svg w={17} h={13}>
            <rect x="1.500" y="3.500" width="13" height="9" rx="1" stroke="#14181b" />
            <path d="M3 5h10v6H3zM15 6h2v4h-2z" fill="#14181b" />
            <path d="M3 0L0 5h2.500L2 8l3.500-5H3z" fill="#14181b" />
          </Svg>
        </div>
        <div className="ml-5 text-right text-[11px] leading-4">
          <div>20:20</div>
          <div>20/01/2026</div>
        </div>
      </div>
    </footer>
  );
}

export default function App() {
  return (
    <div className="relative flex h-screen flex-col overflow-hidden">
      <TitleBar />
      <div className="flex min-h-0 flex-1">
        <DataPanel />
        <div className="flex min-w-0 flex-1 flex-col">
          <TabStrip />
          <Ribbon />
          <Viewport />
          <Timeline />
        </div>
      </div>
      <Taskbar />
      <SaveDialog />
    </div>
  );
}
